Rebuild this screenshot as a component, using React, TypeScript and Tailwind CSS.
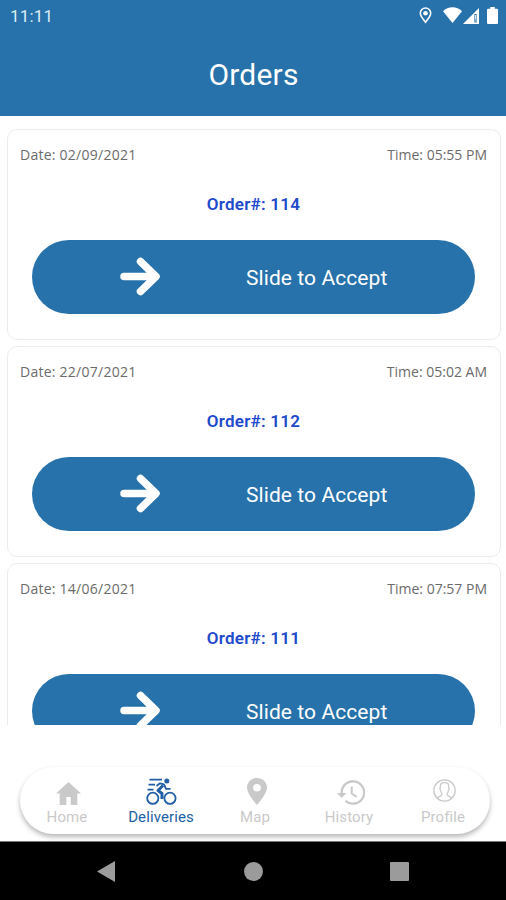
import React from 'react';

interface Order {
  id: number;
  date: string;
  time: string;
}

interface NavItemProps {
  label: string;
  icon: React.ReactNode;
  active?: boolean;
}

const ORDERS: Order[] = [
  { id: 114, date: '02/09/2021', time: '05:55 PM' },
  { id: 112, date: '22/07/2021', time: '05:02 AM' },
  { id: 111, date: '14/06/2021', time: '07:57 PM' },
];

const StatusBar: React.FC = () => (
  <div className="flex h-8 items-center justify-between pl-[10px] pr-[8px] text-white">
    <span className="text-[17px] leading-8 tracking-[0.2px] text-[#dcebf6]">11:11</span>
    <div className="flex items-center">
      <svg className="-mt-[1px] mr-[11px] h-[17px] w-[13px]" viewBox="0 0 13 17" fill="none" stroke="currentColor">
        <path d="M6.5 15.2C4.6 12.7 1.3 9 1.3 6.2a5.2 5.2 0 0 1 10.4 0c0 2.8-3.3 6.5-5.2 9z" strokeWidth="1.6" />
        <circle cx="6.5" cy="6.2" r="2.3" fill="currentColor" stroke="none" />
      </svg>
      <svg className="-mt-[2px] h-[16px] w-[19px]" viewBox="0 0 19 16" fill="currentColor">
        <path d="M9.5 16 0 4.2C2.6 1.6 5.8.3 9.5.3S16.4 1.6 19 4.2z" />
      </svg>
      <svg className="-mt-[1px] ml-[1px] h-[16px] w-[16px]" viewBox="0 0 16 16" fill="currentColor">
        <path fillRule="evenodd" d="M16 0v16H0zM13.6 6h-2.2v8.4h2.2z" />
        <path d="M12.2 7h.8v4.500h-.8zM12.200 12.500h.8v1h-.8z" />
      </svg>
      <svg className="-mt-[2px] ml-[8px] h-[17px] w-[11px]" viewBox="0 0 11 17" fill="currentColor">
        <path d="M3.3 0h4.4v1.7H10a1 1 0 0 1 1 1V16a1 1 0 0 1-1 1H1a1 1 0 0 1-1-1V2.700a1 1 0 0 1 1-1h2.300z" />
      </svg>
    </div>
  </div>
);

const OrderCard: React.FC<{ order: Order }> = ({ order }) => (
  <div className="h-[211px] shrink-0 rounded-[10px] border-[1.5px] border-[#ececec] bg-white pt-[14px] pr-[13px] pl-[12px]">
    <div className="flex h-5 items-center justify-between font-['Open_Sans',sans-serif] text-[14px] text-[#6b6b6b]">
      <span className="tracking-[0.25px]">Date: {order.date}</span>
      <span>Time: {order.time}</span>
    </div>
    <p className="mt-[28px] h-6 text-center text-[17px] leading-6 font-semibold tracking-[0.25px] text-[#2149cc]">
      Order#: {order.id}
    </p>
    <button className="mt-[24px] ml-[12px] flex h-[74px] w-[443px] items-center rounded-full bg-[#2772aa] pl-[88px] text-white">
      <svg
        className="h-[40px] w-[40px] shrink-0"
        viewBox="0 0 40 40"
        fill="none"
        stroke="currentColor"
        strokeWidth="7.5"
        strokeLinecap="round"
        strokeLinejoin="round"
      >
        <path d="M4 19.5H35M20.5 4.5 36 19.5 20.5 34.5" />
      </svg>
      <span className="ml-[86px] pt-[3px] text-[21px] tracking-[0.08px] whitespace-nowrap">Slide to Accept</span>
    </button>
  </div>
);

const HomeIcon = () => (
  <svg className="ml-[3px] h-[23px] w-[25px]" viewBox="0 0 25 23" fill="currentColor">
    <path d="M12.5 0 25 11.5h-3.700V23h-6.600v-8h-4.400v8H3.700V11.500H0z" />
  </svg>
);

const DeliveriesIcon = () => (
  <svg className="h-[27px] w-[31px]" viewBox="0 0 31 27" fill="none" stroke="currentColor">
    <circle cx="6.8" cy="20.3" r="5.6" strokeWidth="1.8" />
    <circle cx="24" cy="20.3" r="5.6" strokeWidth="1.8" />
    <circle cx="20.8" cy="3" r="2.5" fill="currentColor" stroke="none" />
    <path d="M3.5 1.7h12.500M2.500 6.600h6.500M1.500 11.700h6" strokeWidth="1.8" />
    <path d="m17 7.500-5 5 4 3v5.500" strokeWidth="3" strokeLinejoin="round" />
    <path d="m10.500 8 3.500-2.700 4 1 2 4.500h4.500" strokeWidth="1.8" strokeLinejoin="round" />
  </svg>
);

const MapIcon = () => (
  <svg className="ml-[3px] h-[27px] w-[20px]" viewBox="0 0 20 28" preserveAspectRatio="none" fill="currentColor">
    <path
      fillRule="evenodd"
      d="M10 0c5.6 0 10 4.4 10 9.9C20 17 10 28 10 28S0 17 0 9.9C0 4.4 4.4 0 10 0zm0 6.100a3.900 3.900 0 1 0 0 7.800 3.900 3.900 0 0 0 0-7.800z"
    />
  </svg>
);

const HistoryIcon = () => (
  <svg className="ml-[3px] h-[25px] w-[28px]" viewBox="0 0 28 25" fill="none" stroke="currentColor">
    <path d="M4.7 13.5v-1a11.2 11.2 0 1 1 3.800 8.400" strokeWidth="2.3" />
    <path d="M0 13h9.400l-4.700 5z" fill="currentColor" stroke="none" />
    <path d="M14.700 6.500v7l5 3.300" strokeWidth="2" />
  </svg>
);

const ProfileIcon = () => (
  <svg className="mb-[3px] ml-[3px] h-[23px] w-[23px]" viewBox="0 0 23 23" fill="none" stroke="currentColor" strokeWidth="1.3">
    <circle cx="11.5" cy="11.5" r="10.7" />
    <path d="M4 19.2c.6-1.7 4.6-1.7 4.9-3.5.2-1.5-1.3-2.300-1.300-4.400-.9-.6-.9-2-.2-2.500C6.600 5 8.400 3.600 11.500 3.600s4.900 1.400 4.100 5.200c.7.5.7 1.900-.2 2.500 0 2.100-1.500 2.900-1.300 4.400.3 1.800 4.300 1.800 4.900 3.500" />
  </svg>
);

const NavItem: React.FC<NavItemProps> = ({ label, icon, active = false }) => (
  <a className={`flex w-[94px] flex-col items-center ${active ? 'text-[#205fa5]' : 'text-[#c9c9c9]'}`}>
    <span className="flex h-[41px] items-end justify-center pb-[3px]">{icon}</span>
    <span className="text-[15px] leading-[19px] tracking-[0.1px]">{label}</span>
  </a>
);

const BottomNav: React.FC = () => (
  <nav className="ml-[20px] flex h-[67px] w-[470px] rounded-full bg-white shadow-[0_3px_5px_rgba(0,0,0,0.28)]">
    <NavItem label="Home" icon={<HomeIcon />} />
    <NavItem label="Deliveries" icon={<DeliveriesIcon />} active />
    <NavItem label="Map" icon={<MapIcon />} />
    <NavItem label="History" icon={<HistoryIcon />} />
    <NavItem label="Profile" icon={<ProfileIcon />} />
  </nav>
);

const SystemBar: React.FC = () => (
  <div className="flex h-[59px] items-center justify-between border-t border-[#777] bg-black pr-[97px] pl-[97px] text-[#9b9b9b]">
    <svg className="h-[21px] w-[18px]" viewBox="0 0 18 21" fill="currentColor">
      <path d="M0 10.5 18 0v21z" />
    </svg>
    <div className="ml-[2px] h-[19px] w-[19px] rounded-full bg-[#9b9b9b]" />
    <div className="h-[19px] w-[19px] rounded-[1px] bg-[#9b9b9b]" />
  </div>
);

export default function App() {
  return (
    <div className="flex h-[900px] w-[506px] flex-col overflow-hidden bg-white font-[Roboto,sans-serif]">
      <header className="h-[116px] shrink-0 bg-[#2772aa] text-white">
        <StatusBar />
        <h1 className="mt-[22px] pl-[1px] text-center text-[30px] leading-[42px] tracking-[0.2px]">Orders</h1>
      </header>
      <main className="flex h-[609px] shrink-0 flex-col gap-[6.2px] overflow-hidden pt-[13px] pr-[5px] pl-[7px]">
        {ORDERS.map((order) => (
          <OrderCard key={order.id} order={order} />
        ))}
      </main>
      <div className="h-[116px] shrink-0 pt-[42px]">
        <BottomNav />
      </div>
      <SystemBar />
    </div>
  );
}
